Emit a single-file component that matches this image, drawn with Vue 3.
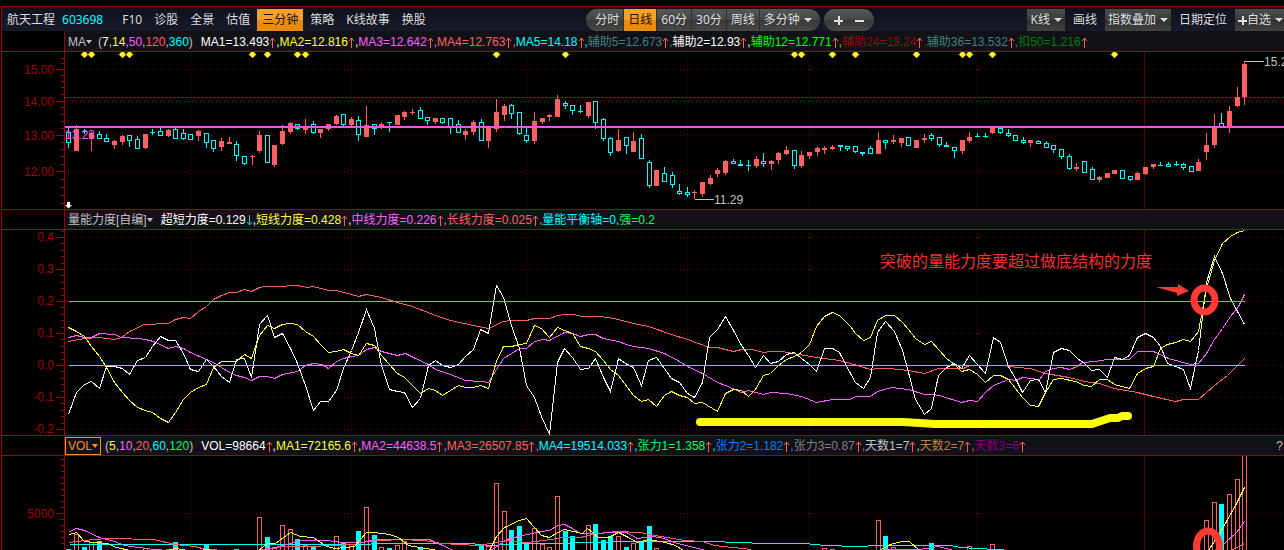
<script setup>
const leftMenu = ['F10', '诊股', '全景', '估值', '三分钟', '策略', 'K线故事', '换股']
const periods = ['分时', '日线', '60分', '30分', '周线', '多分钟']

const C = {
  white: '#ffffff', yellow: '#ffff40', magenta: '#ff60ff', red: '#ff6060', cyan: '#00ffff',
  green: '#00ff60', gray: '#c0c0c0', teal: '#408080', lime: '#00ff00', dark: '#a00000',
  moss: '#008000', blue: '#0080ff', dim: '#808080', brown: '#c08040', purple: '#800080',
}

const priceParams = [['7', C.white], ['14', C.yellow], ['50', C.magenta], ['120', C.red], ['360', C.cyan]]
const priceValues = [
  ['MA1=13.493', C.white, 'rise'], ['MA2=12.816', C.yellow, 'rise'], ['MA3=12.642', C.magenta, 'rise'],
  ['MA4=12.763', C.red, 'rise'], ['MA5=14.18', C.cyan, 'rise'], ['辅助5=12.673', C.teal, 'rise'],
  ['辅助2=12.93', C.white, 'rise'], ['辅助12=12.771', C.lime, 'rise'], ['辅助24=13.24', C.dark, 'rise'],
  ['辅助36=13.532', C.teal, 'rise'], ['扣50=1.216', C.moss, 'rise'],
]
const forceValues = [
  ['超短力度=0.129', C.white, 'fall'], ['短线力度=0.428', C.yellow, 'rise'], ['中线力度=0.226', C.magenta, 'rise'],
  ['长线力度=0.025', C.red, 'rise'], ['量能平衡轴=0', C.cyan, ''], ['强=0.2', C.green, ''],
]
const volParams = [['5', C.yellow], ['10', C.magenta], ['20', C.red], ['60', C.cyan], ['120', C.green]]
const volValues = [
  ['VOL=98664', C.white, 'rise'], ['MA1=72165.6', C.yellow, 'rise'], ['MA2=44638.5', C.magenta, 'rise'],
  ['MA3=26507.85', C.red, 'rise'], ['MA4=19514.033', C.cyan, 'rise'], ['张力1=1.358', C.green, 'rise'],
  ['张力2=1.182', C.blue, 'rise'], ['张力3=0.87', C.dim, 'rise'], ['天数1=7', C.gray, 'rise'],
  ['天数2=7', C.brown, 'rise'], ['天数3=6', C.purple, 'rise'],
]

const barX = (i) => Math.round(68.3 + i * 7.636)

// one bar each: colour, high, body top, body bottom, low
const candles = `c128,132,143,148 r125,129,151,151 c129,131,131,134 r132,133,139,151 c131,134,139,139 c134,138,142,142
r140,141,145,149 r135,136,142,145 c135,135,141,147 c136,139,149,149 r134,134,148,149 c129,132,132,135 c128,131,136,136
r129,130,136,137 c128,129,139,139 c129,133,139,140 c134,134,140,140 r130,131,136,141 c133,133,143,148 c140,140,149,152
r138,141,147,151 r137,142,144,144 c141,144,156,161 c156,156,164,165 r155,156,156,165 r131,135,151,153 c135,135,163,163
r145,145,165,167 r125,131,144,145 r122,123,132,134 c124,124,129,130 r119,127,130,134 c121,124,133,134 r129,129,133,138
r124,124,129,131 r115,116,124,125 c114,114,125,126 r117,119,125,126 c116,120,135,141 r106,125,137,137 c124,124,129,135
r122,124,128,129 c122,122,122,132 r115,115,125,125 r111,112,117,120 r109,112,112,115 c107,110,119,119 c117,117,121,125
r118,118,122,124 c118,118,123,124 c118,118,127,134 c120,124,133,133 r129,131,135,140 r120,122,132,135 c119,122,141,141
r127,127,141,148 r99,112,129,132 r104,106,115,121 c104,105,114,119 c112,112,134,135 c128,135,141,143 r112,121,141,144
r118,118,122,124 r114,115,117,121 r95,99,117,117 c101,103,106,109 c105,105,111,115 c105,111,111,113 r102,102,116,118
c101,101,123,129 c118,119,139,141 c137,138,153,156 r129,140,151,152 c137,137,146,154 r132,141,152,152 c134,138,159,159
c160,162,186,188 r170,170,186,186 c167,173,182,182 c172,175,185,188 c184,191,194,195 c187,192,195,197 r190,192,192,199
r182,182,194,197 r175,178,184,185 r168,170,174,177 r160,161,173,175 c159,161,164,164 c160,164,166,166 c160,165,165,171
r156,159,166,168 c153,161,164,167 r160,161,164,170 r152,153,160,164 r146,150,154,155 c150,150,166,169 r151,155,166,168
r152,152,156,159 r147,148,152,156 r146,148,150,154 r145,147,149,150 c145,145,147,151 c146,146,149,151 c146,146,152,153
c152,152,154,156 c146,148,154,154 r132,140,154,154 c140,140,143,149 r135,140,142,144 r138,138,143,147 c137,137,146,146
r140,140,148,148 r134,138,140,143 c133,135,139,141 c137,137,145,147 c142,145,147,147 c147,147,151,158 r140,140,151,154
r132,137,141,143 c133,136,136,137 c133,136,136,138 r127,127,133,134 c128,128,133,134 c129,133,136,137 c135,135,141,141
c137,140,143,144 r140,140,143,147 c140,141,144,144 c141,143,148,148 c145,145,150,153 c149,149,157,159 c154,156,169,170
r163,167,169,171 c161,161,173,173 c167,169,180,180 r176,177,180,182 r173,173,178,178 r170,170,174,174 c170,170,179,179
c176,176,180,181 r172,173,180,180 r167,167,174,175 r164,164,167,169 c162,165,165,165 c162,164,167,167 c161,164,164,166
c163,164,168,170 c166,166,172,172 r159,162,171,171 r133,145,152,160 r114,127,145,148 c113,123,127,127 r106,111,127,133
r87,97,106,107 r61,64,97,105`.split(/\s+/).map((s, i) => {
  const [high, top, bottom, low] = s.slice(1).split(',').map(Number)
  return { x: barX(i), up: s[0] === 'r', high, top, bottom, low }
})

const diamonds = [2, 3, 7, 8, 24, 26, 30, 31, 56, 65, 95, 96, 100, 103, 111, 117, 118, 121, 137].map(barX)

const gridX = [68, 190, 351, 526, 687, 809, 977]
const priceTicks = [[69, '15.00'], [101, '14.00'], [135, '13.00'], [171, '12.00']]
const priceMinor = [58, 63, 75, 81, 87, 94, 107, 114, 121, 128, 142, 149, 156, 164, 179, 187, 195, 203]
const forceTicks = [[237, '0.4'], [269, '0.3'], [301, '0.2'], [333, '0.1'], [365, '0.0'], [397, '-0.1'], [429, '-0.2']]
const forceMinor = []
for (let k = -1; k < 31; k++) if (k % 5) forceMinor.push(Math.round(237 + k * 6.4))
const volMinor = [459, 465, 471, 477, 483, 489, 495, 501, 507, 519, 525, 531, 537, 543]

const forceLines = [
  { color: C.red, points: '68,341 84,338 99,337 114,339 121,337 129,331 144,324 168,323 175,319 183,317 190,318 198,311 206,306 213,299 221,295 229,292 236,292 244,289 251,291 259,287 265,286 283,286 290,285 297,285 307,287 313,286 328,290 336,290 351,294 358,296 366,294 381,297 397,302 412,306 430,313 435,315 450,320 473,325 488,328 503,321 511,320 526,320 534,318 549,318 557,315 564,314 574,314 581,316 600,316 614,318 633,323 648,326 671,334 687,339 709,347 717,347 733,351 741,349 751,349 764,352 770,351 782,351 798,354 816,357 839,360 850,363 870,369 877,368 888,368 908,370 924,373 938,368 963,368 969,365 1003,365 1017,367 1030,368 1045,373 1069,377 1084,381 1099,383 1114,388 1137,392 1153,396 1175,401 1183,399 1198,399 1214,385 1227,375 1244,358' },
  { color: C.magenta, points: '68,337 76,335 84,337 91,337 99,333 114,334 121,337 137,338 145,339 153,341 168,348 175,346 183,348 190,352 206,359 213,362 221,367 229,372 236,375 244,377 251,380 259,376 267,376 274,378 282,374 297,371 305,365 313,363 321,364 328,368 336,361 343,358 351,356 358,355 366,349 374,347 381,351 397,355 405,353 413,357 428,364 435,369 450,374 465,380 480,381 488,382 496,369 503,358 519,348 526,348 534,341 543,339 549,340 564,332 572,333 580,336 588,334 595,334 603,338 618,341 626,344 633,346 648,348 664,353 679,361 687,366 702,373 717,382 725,385 741,392 748,390 763,394 770,392 786,393 801,396 816,402 832,399 850,399 855,396 870,396 877,391 891,387 908,389 924,394 931,394 939,395 961,402 969,400 977,401 985,392 993,385 1008,379 1016,380 1022,377 1039,379 1045,371 1053,368 1061,367 1069,369 1077,366 1082,362 1095,361 1107,359 1129,359 1137,351 1153,351 1168,358 1190,364 1198,363 1206,353 1214,339 1222,328 1230,316 1238,306 1244,294' },
  { color: C.white, points: '68,414 76,392 84,384 91,381 99,388 106,366 114,366 122,368 129,374 137,360 145,357 152,346 160,336 168,340 175,340 183,353 190,369 198,371 206,359 213,366 221,376 229,382 236,359 244,358 251,377 259,324 267,315 274,337 282,333 290,348 297,363 305,385 313,410 320,401 328,401 336,390 343,368 351,350 358,332 366,309 374,328 381,365 389,389 397,391 404,392 412,407 420,398 428,365 435,360 442,365 450,367 458,364 465,356 473,349 480,329 488,333 496,285 503,297 511,325 519,348 526,385 534,397 541,416 549,434 557,362 564,348 572,357 580,369 588,368 595,358 603,377 610,391 618,358 625,363 633,367 641,385 648,360 656,357 664,368 671,378 679,382 687,393 694,397 702,382 709,337 717,329 725,316 733,330 741,345 748,355 755,367 763,355 770,363 778,361 786,354 794,352 801,358 809,364 816,371 824,348 832,348 839,352 850,373 855,382 863,388 870,377 877,332 885,321 894,331 902,350 908,372 915,399 924,414 931,408 938,375 946,367 954,363 961,368 969,355 977,364 985,373 993,337 1000,342 1008,366 1015,378 1022,392 1030,380 1038,379 1045,392 1053,352 1061,348 1069,350 1077,358 1084,363 1091,370 1099,369 1107,377 1114,357 1122,359 1129,355 1137,337 1145,333 1153,337 1160,346 1167,363 1175,366 1183,369 1190,388 1198,350 1206,282 1214,256 1222,273 1230,298 1244,324' },
  { color: C.yellow, points: '68,327 76,331 84,336 91,346 99,356 106,367 114,382 122,392 129,400 137,407 145,410 152,412 160,418 168,422 175,412 183,399 190,392 198,387 206,384 213,367 221,361 236,361 244,354 251,358 259,335 267,325 274,328 282,324 290,323 297,324 305,331 313,336 320,344 328,352 336,351 343,349 351,353 358,355 366,343 374,345 381,355 389,364 397,373 404,377 420,393 428,388 435,390 442,395 450,390 458,385 465,387 473,387 480,385 488,388 496,361 503,346 511,346 519,344 526,343 534,325 541,328 549,337 557,327 564,330 572,333 580,346 588,348 595,351 603,360 610,369 618,375 633,395 641,401 648,399 656,406 664,395 671,391 679,395 687,397 694,403 702,402 717,411 725,393 733,389 741,390 748,396 755,389 763,375 770,373 778,365 786,359 794,356 801,352 809,344 816,326 824,316 832,312 839,315 850,326 855,333 863,340 870,337 877,320 885,315 894,315 902,322 908,329 915,338 924,344 931,341 946,358 954,364 961,371 969,369 977,374 985,382 993,375 1000,375 1008,379 1022,397 1030,405 1038,406 1045,392 1053,379 1061,378 1075,381 1084,385 1091,386 1099,379 1107,379 1114,384 1129,388 1137,373 1145,368 1153,366 1160,348 1167,344 1175,342 1183,339 1190,341 1198,331 1206,288 1214,260 1222,243 1230,236 1237,232 1244,230' },
]

// bar index, colour, top of the bar
const volumes = `0c549 1r534 2c547 3r542 4c541 10r548 13r549 14c542 18c544 22c549 25r517 26c537 27r548 28r525 29r529 30c539
31r545 32c547 35r536 36c542 37r544 38c531 39r507 40c535 41r547 42c548 43r545 44r541 46c547 54c544 55r546 56r483 57r511
58c530 59c526 60c543 61r528 62r544 63r547 64r496 65c531 66c536 68r525 69c524 70c540 71c536 72r536 73c547 74r543 75c541
76c526 77r548 99r548 100r549 106r520 107c536 108r547 113c543 118r546 121r544 149r520 150r502 151c504 152r494 153r479
154r455`.split(/\s+/).map((s) => {
  const [, i, kind, y] = s.match(/(\d+)([rc])(\d+)/)
  return { x: barX(+i), up: kind === 'r', y: +y }
})

const volLines = [
  { color: C.cyan, points: '69,544 363,544 378,543 469,543 490,545 526,543 564,543 580,542 640,541 710,541 739,542 763,543 804,543 825,545 858,546 878,545 950,545 960,547 1012,550' },
  { color: C.red, points: '69,542 92,539 110,538 153,539 175,544 194,546 206,549 226,550' },
  { color: C.red, points: '261,549 282,546 310,546 354,544 367,541 398,539 424,540 441,543 478,545 496,542 506,540 526,542 551,539 561,537 580,537 592,534 616,531 640,532 660,536 685,540 702,541 714,545 751,549' },
  { color: C.red, points: '1231,550 1244,543' },
  { color: C.magenta, points: '69,531 76,528 84,530 99,537 114,541 124,545 153,549 169,550' },
  { color: C.magenta, points: '261,550 275,547 290,543 300,540 326,540 343,542 363,542 374,539 429,539 453,550' },
  { color: C.magenta, points: '490,550 498,545 506,539 522,535 541,531 549,530 557,525 564,524 572,528 580,533 626,532 637,538 650,536 660,537 677,543 706,550' },
  { color: C.magenta, points: '884,549 919,549 938,546 953,550' },
  { color: C.magenta, points: '1224,543 1236,532 1244,521' },
  { color: C.yellow, points: '69,534 76,532 84,541 107,543 116,547 130,550' },
  { color: C.yellow, points: '167,550 175,548 188,550' },
  { color: C.yellow, points: '199,550 206,549 212,550' },
  { color: C.yellow, points: '258,550 267,543 275,543 290,532 300,536 313,537 326,546 335,548 354,546 366,532 374,532 389,534 398,537 408,545 437,550' },
  { color: C.yellow, points: '489,550 496,536 504,527 519,520 526,518 541,535 549,537 557,532 564,529 582,533 587,528 598,537 608,537 618,532 626,536 637,542 648,539 665,542 675,545 683,550' },
  { color: C.yellow, points: '879,550 890,544 901,541 909,541 919,550' },
  { color: C.yellow, points: '1208,550 1221,530 1236,503 1244,487' },
]
</script>

<template>
  <main class="terminal">
    <nav class="toolbar">
      <div class="group left">
        <span class="stock">航天工程</span>
        <span class="code">603698</span>
        <button v-for="m in leftMenu" :key="m" class="item" :class="{ active: m === '三分钟' }">{{ m }}</button>
      </div>
      <div class="group">
        <div class="pill">
          <button v-for="p in periods" :key="p" class="period" :class="{ active: p === '日线' }">
            {{ p }}<i v-if="p === '多分钟'" class="caret"></i>
          </button>
        </div>
        <div class="pill zoom">
          <button aria-label="放大"><svg width="9" height="9"><path d="M0 4.5H9M4.5 0V9" /></svg></button>
          <button aria-label="缩小"><svg width="9" height="9"><path d="M0 4.5H9" /></svg></button>
        </div>
      </div>
      <div class="group right">
        <button class="box">K线<i class="caret"></i></button>
        <button class="plain">画线</button>
        <button class="box">指数叠加<i class="caret"></i></button>
        <button class="plain">日期定位</button>
        <button class="box last"><svg width="9" height="9"><path d="M0 4.5H9M4.5 0V9" /></svg>自选<i class="caret"></i></button>
      </div>
    </nav>

    <header class="legend first">
      <div class="strip">
        <button class="name">MA<i class="caret"></i></button>
        <span class="params">(<template v-for="(p, i) in priceParams" :key="i"><template v-if="i">,</template><span :style="{ color: p[1] }">{{ p[0] }}</span></template>)</span>
        <span class="values"><span v-for="(v, i) in priceValues" :key="i" :style="{ color: v[1] }">{{ v[0] }}<svg v-if="v[2]" class="trend" :class="v[2]" width="7" height="11"><path d="M3.5 11V1M1 4L3.5 1L6 4" /></svg><template v-if="i < priceValues.length - 1">,</template></span></span>
      </div>
    </header>

    <svg class="plot" viewBox="2 52 1282 157">
      <g class="grid">
        <line v-for="x in gridX" :key="x" :x1="x + .5" :x2="x + .5" y1="53" y2="209" />
        <line v-for="t in priceTicks" :key="t[1]" x1="68" x2="1284" :y1="t[0] + .5" :y2="t[0] + .5" />
      </g>
      <line class="cursor" x1="1144.5" x2="1144.5" y1="52" y2="209" />
      <line class="level" x1="65" x2="1284" y1="97.5" y2="97.5" />
      <g class="axis">
        <line x1="64.5" x2="64.5" y1="52" y2="209" />
        <line v-for="t in priceTicks" :key="t[1]" x1="56" x2="64" :y1="t[0] + .5" :y2="t[0] + .5" />
        <line v-for="y in priceMinor" :key="y" x1="61" x2="64" :y1="y + .5" :y2="y + .5" />
      </g>
      <text v-for="t in priceTicks" :key="t[1]" class="tick" x="54" :y="t[0] + 5">{{ t[1] }}</text>
      <g class="crisp">
        <g v-for="(k, i) in candles" :key="i" :class="k.up ? 'up' : 'down'">
          <template v-if="k.up || k.bottom - k.top < 3">
            <rect :x="k.x" :y="k.high" width="1" :height="Math.max(1, k.low - k.high)" />
            <rect :x="k.x - 2" :y="k.top" width="5" :height="Math.max(1, k.bottom - k.top)" />
          </template>
          <template v-else>
            <rect :x="k.x" :y="k.high" width="1" :height="k.top - k.high" />
            <rect :x="k.x" :y="k.bottom" width="1" :height="k.low - k.bottom" />
            <rect class="hollow" :x="k.x - 1.5" :y="k.top + .5" width="4" :height="k.bottom - k.top - 1" />
          </template>
        </g>
      </g>
      <rect class="band" x="65" y="126" width="1219" height="2" />
      <text class="pinned" x="65" y="139">13.23</text>
      <path v-for="x in diamonds" :key="x" class="diamond" :d="`M${x + .5} 51L${x + 4} 54.5L${x + .5} 58L${x - 3} 54.5Z`" />
      <path class="mark" d="M67 202H70V205H72L68.5 208.5L65 205H67Z" />
      <path class="callout" d="M694.5 199.5H714M1244.5 61.5H1264" />
      <text class="quote" x="714" y="204">11.29</text>
      <text class="quote" x="1264" y="66">15.28</text>
    </svg>

    <header class="legend">
      <div class="strip">
        <button class="name">量能力度[自编]<i class="caret"></i></button>
        <span class="values"><span v-for="(v, i) in forceValues" :key="i" :style="{ color: v[1] }">{{ v[0] }}<svg v-if="v[2]" class="trend" :class="v[2]" width="7" height="11"><path d="M3.5 11V1M1 4L3.5 1L6 4" /></svg><template v-if="i < forceValues.length - 1">,</template></span></span>
      </div>
    </header>

    <svg class="plot" viewBox="2 230 1282 205">
      <g class="grid">
        <line v-for="x in gridX" :key="x" :x1="x + .5" :x2="x + .5" y1="233" y2="435" />
        <line v-for="t in forceTicks" :key="t[1]" x1="68" x2="1284" :y1="t[0] + .5" :y2="t[0] + .5" />
      </g>
      <line class="cursor" x1="1144.5" x2="1144.5" y1="230" y2="435" />
      <g class="axis">
        <line x1="64.5" x2="64.5" y1="230" y2="435" />
        <line v-for="t in forceTicks" :key="t[1]" x1="56" x2="64" :y1="t[0] + .5" :y2="t[0] + .5" />
        <line v-for="y in forceMinor" :key="y" x1="61" x2="64" :y1="y + .5" :y2="y + .5" />
      </g>
      <text v-for="t in forceTicks" :key="t[1]" class="tick" x="54" :y="t[0] + 4">{{ t[1] }}</text>
      <g class="curves" transform="translate(.5 .5)">
        <polyline v-for="l in forceLines" :key="l.color" :points="l.points" :stroke="l.color" />
        <line x1="68" x2="1244" y1="301" y2="301" :stroke="C.green" />
        <line x1="68" x2="1244" y1="365" y2="365" :stroke="C.cyan" />
      </g>
      <path class="marker" d="M700 422H903L935 424H1092L1110 418H1118L1122 416H1128" />
      <text class="note" x="880" y="267">突破的量能力度要超过做底结构的力度</text>
      <path class="pointer" d="M1156 287L1178 287V284L1189 291L1177 296V293Z" />
      <ellipse class="ring" cx="1204.5" cy="300" rx="10.5" ry="12" />
    </svg>

    <header class="legend">
      <div class="strip">
        <button class="name boxed">VOL<i class="caret"></i></button>
        <span class="params">(<template v-for="(p, i) in volParams" :key="i"><template v-if="i">,</template><span :style="{ color: p[1] }">{{ p[0] }}</span></template>)</span>
        <span class="values"><span v-for="(v, i) in volValues" :key="i" :style="{ color: v[1] }">{{ v[0] }}<svg v-if="v[2]" class="trend" :class="v[2]" width="7" height="11"><path d="M3.5 11V1M1 4L3.5 1L6 4" /></svg><template v-if="i < volValues.length - 1">,</template></span></span>
        <button class="help">?</button>
      </div>
    </header>

    <svg class="plot" viewBox="2 456 1282 94">
      <g class="grid">
        <line v-for="x in gridX" :key="x" :x1="x + .5" :x2="x + .5" y1="457" y2="550" />
        <line x1="68" x2="1284" y1="513.5" y2="513.5" />
      </g>
      <line class="cursor" x1="1144.5" x2="1144.5" y1="456" y2="550" />
      <g class="axis">
        <line x1="64.5" x2="64.5" y1="456" y2="550" />
        <line x1="56" x2="64" y1="513.5" y2="513.5" />
        <line v-for="y in volMinor" :key="y" x1="61" x2="64" :y1="y + .5" :y2="y + .5" />
      </g>
      <text class="tick" x="54" y="518">5000</text>
      <g class="crisp">
        <g v-for="v in volumes" :key="v.x" :class="v.up ? 'up' : 'down'">
          <rect v-if="v.up" class="hollow" :x="v.x - 1.5" :y="v.y + .5" width="4" :height="552 - v.y" />
          <rect v-else :x="v.x - 2" :y="v.y" width="5" :height="551 - v.y" />
        </g>
      </g>
      <g class="curves" transform="translate(.5 .5)">
        <polyline v-for="(l, i) in volLines" :key="i" :points="l.points" :stroke="l.color" />
      </g>
      <ellipse class="ring" cx="1208" cy="546" rx="11.5" ry="15" />
    </svg>
  </main>
</template>

<style>
body {
  background: #000;
}
</style>

<style scoped>
.terminal {
  margin: 6px 0 0 1px;
  border-top: 1px solid #a00000;
  border-left: 1px solid #a00000;
  overflow: hidden;
  background: #000;
  color: #c0c0c0;
  font: 12px/18px "Liberation Sans", "Noto Sans CJK SC", sans-serif;
  white-space: nowrap;
}
button {
  margin: 0;
  padding: 0;
  border: 0;
  background: none;
  color: inherit;
  font: inherit;
  white-space: nowrap;
  cursor: pointer;
}
.toolbar {
  display: flex;
  justify-content: space-between;
  height: 24px;
  padding-left: 5px;
  background: linear-gradient(#10111c, #181a2a);
  color: #dcdcdc;
  font-family: "Noto Sans", "Noto Sans CJK SC", sans-serif;
}
.group {
  display: flex;
  align-items: stretch;
  padding-top: 2px;
}
.group > span,
.group > button {
  display: flex;
  align-items: center;
}
.toolbar svg {
  fill: none;
  stroke: #e0e0e0;
  stroke-width: 2;
  shape-rendering: crispEdges;
}
.code {
  margin: 0 14px 0 7px;
  color: #00ffff;
}
.item {
  padding: 0 5px;
  margin-right: 2px;
}
.item.active,
.period.active {
  background: linear-gradient(#f9a12a 45%, #ec8a0c 55%);
  color: #201000;
}
.pill {
  display: flex;
  border-radius: 11px;
  overflow: hidden;
  background: linear-gradient(#575757, #464646 48%, #383838 52%, #484848);
}
.period {
  display: flex;
  align-items: center;
  padding: 0 4px;
  border-right: 1px solid #303030;
}
.period:first-child {
  padding-left: 9px;
}
.period:last-child {
  padding-right: 8px;
  border: 0;
}
.zoom {
  gap: 12px;
  margin-left: 4px;
  padding: 0 10px;
}
.zoom button {
  display: flex;
  align-items: center;
}
.caret {
  display: inline-block;
  margin-left: 4px;
  border: 4px solid transparent;
  border-top: 4px solid currentColor;
  border-bottom: 0;
}
.box {
  padding: 0 3px;
  background: linear-gradient(#4c4c4c, #3c3c3c 48%, #303030 52%, #424242);
}
.plain {
  padding: 0 8px;
}
.last {
  padding-right: 1px;
}
.legend {
  padding-left: 62px;
  border-top: 1px solid #a00000;
  border-bottom: 1px solid #a00000;
}
.legend.first {
  border-top: 0;
}
.strip {
  display: flex;
  align-items: center;
  box-sizing: border-box;
  height: 19px;
  border-left: 1px solid #a00000;
  background: #111218;
}
.first .strip {
  height: 20px;
  padding-top: 2px;
}
.name {
  display: flex;
  align-items: center;
  margin-left: 3px;
}
.name .caret {
  margin-left: 0;
  border-width: 4px 3px 0;
}
.name.boxed {
  height: 18px;
  margin: 0 -2px 0 0;
  padding: 0 2px;
  border: 1px solid #ff9020;
  color: #ff9020;
  line-height: 16px;
}
.params {
  margin-left: 6px;
}
.values {
  margin-left: 8px;
}
.trend {
  vertical-align: -2px;
  fill: none;
  stroke: #ff6050;
  stroke-width: 1;
}
.trend.fall {
  stroke: #00d0f0;
  transform: rotate(180deg);
}
.help {
  margin-left: auto;
  padding-right: 1px;
}
.plot {
  display: block;
  width: 100%;
  font-size: 12px;
}
.grid,
.axis,
.cursor,
.level,
.crisp,
.curves,
.callout {
  fill: none;
  shape-rendering: crispEdges;
}
.grid {
  stroke: #700000;
  stroke-dasharray: 1 3;
}
.axis {
  stroke: #a00000;
}
.cursor {
  stroke: #600000;
}
.level {
  stroke: #a00000;
  stroke-dasharray: 3 1;
}
.tick {
  fill: #a00000;
  text-anchor: end;
}
.up {
  fill: #ff6060;
  stroke: none;
}
.down {
  fill: #00ffff;
  stroke: none;
}
.hollow {
  fill: #000;
}
.up .hollow {
  stroke: #ff6060;
}
.down .hollow {
  stroke: #00ffff;
}
.band,
.pinned {
  fill: #ff50ff;
}
.diamond {
  fill: #ffff20;
  stroke: #c02000;
  stroke-width: 1;
  paint-order: stroke;
}
.mark {
  fill: #fff;
}
.callout {
  stroke: #c0c0c0;
}
.quote {
  fill: #c0c0c0;
}
.marker {
  fill: none;
  stroke: #ffff00;
  stroke-width: 8;
  stroke-linecap: round;
  stroke-linejoin: round;
}
.note {
  fill: #f83030;
  font-size: 16px;
}
.pointer {
  fill: #ff3b36;
}
.ring {
  fill: none;
  stroke: #ff3b36;
  stroke-width: 7;
}
</style>
